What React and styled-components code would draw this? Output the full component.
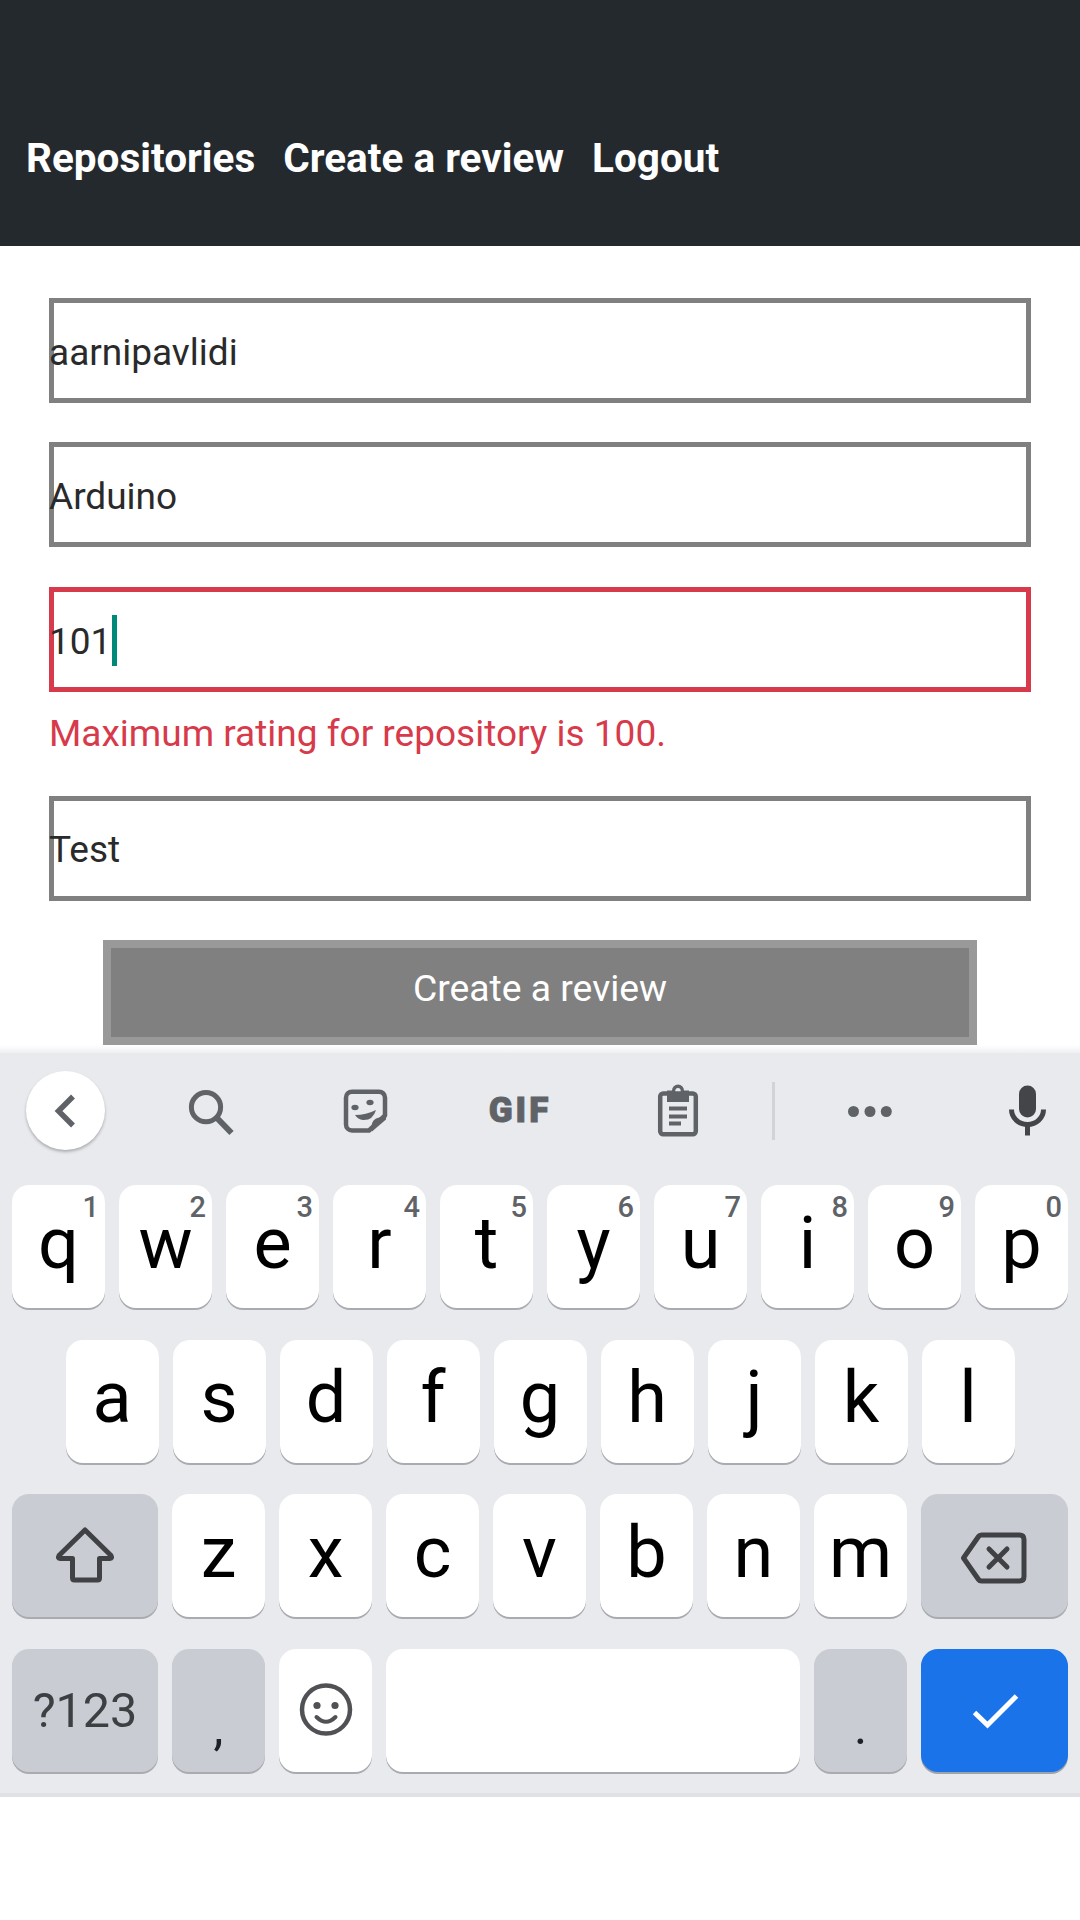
import React from "react";
import styled, { createGlobalStyle } from "styled-components";

const Global = createGlobalStyle`
  html, body { margin: 0; padding: 0; background: #fff; }
  body { font-family: Roboto, "Liberation Sans", sans-serif; }
  #root { width: 1080px; height: 1920px; overflow: hidden; }
`;

const Page = styled.div`
  width: 1080px;
  display: flex;
  flex-direction: column;
`;

const Header = styled.header`
  height: 246px;
  box-sizing: border-box;
  padding: 135px 0 0 26px;
  background: #24292e;
  display: flex;
  gap: 28px;
`;

const NavLink = styled.a`
  color: #fff;
  font-size: 40.5px;
  font-weight: 700;
  line-height: 47px;
`;

const Form = styled.form`
  display: flex;
  flex-direction: column;
  padding: 52px 49px 0;
`;

const Field = styled.div`
  height: 105px;
  box-sizing: border-box;
  margin-bottom: ${(p) => p.$gap}px;
  padding-top: ${(p) => p.$top}px;
  box-shadow: inset 0 0 0 5px ${(p) => (p.$error ? "#d73a4a" : "#808080")};
  display: flex;
  align-items: center;
  color: #2a2a2a;
  font-size: 37px;
  line-height: 43px;
`;

const Caret = styled.span`
  width: 5px;
  height: 51px;
  margin: 0 0 2px 1px;
  background: #00897b;
`;

const ErrorText = styled.div`
  height: 64px;
  margin-bottom: 40px;
  padding-top: 20px;
  box-sizing: border-box;
  color: #d73a4a;
  font-size: 37px;
  line-height: 43px;
`;

const Submit = styled.div`
  align-self: center;
  width: 874px;
  height: 105px;
  box-sizing: border-box;
  border: 8px solid #999;
  background: #808080;
  color: #fff;
  font-size: 37.3px;
  display: flex;
  align-items: center;
  justify-content: center;
  padding-bottom: 9px;
`;

const Shade = styled.div`
  height: 8px;
  background: linear-gradient(to bottom, #fff, #eff0f2);
`;

const Keyboard = styled.section`
  background: #e8eaed;
  border-bottom: 4px solid #e0e1e4;
  padding: 18px 12px 21.5px;
  display: flex;
  flex-direction: column;
`;

const Toolbar = styled.div`
  height: 79px;
  margin: 0 0 35px 14px;
  display: flex;
  align-items: center;
`;

const BackButton = styled.div`
  width: 79px;
  height: 79px;
  border-radius: 50%;
  background: #fff;
  box-shadow: 0 2px 3px rgba(60, 64, 67, 0.35);
  display: flex;
  align-items: center;
  justify-content: center;
`;

const Slot = styled.div`
  width: ${(p) => p.$w}px;
  margin-left: ${(p) => p.$ml}px;
  display: flex;
  justify-content: center;
`;

const GifLabel = styled.span`
  font-family: Roboto, sans-serif;
  font-weight: 900;
  font-size: 35px;
  line-height: 40px;
  letter-spacing: 3px;
  color: #5f6368;
  -webkit-text-stroke: 1px #5f6368;
`;

const Divider = styled.div`
  width: 3px;
  height: 58px;
  background: #d2d3d6;
`;

const Row = styled.div`
  display: flex;
  justify-content: center;
  gap: 14px;
  margin-bottom: ${(p) => (p.$last ? 0 : "31.5px")};
`;

const Key = styled.div`
  position: relative;
  width: ${(p) => p.$w || 93}px;
  height: 123px;
  border-radius: 17px;
  background: ${(p) => (p.$tone === "gray" ? "#caccd3" : p.$tone === "blue" ? "#1a73e8" : "#fff")};
  box-shadow: 0 2px 0 ${(p) => (p.$tone === "blue" ? "#9fa3aa" : "#a9abb0")};
  display: flex;
  align-items: center;
  justify-content: center;
`;

const Letter = styled.span`
  color: #000;
  font-size: 72px;
  line-height: 84px;
  margin-bottom: 6px;
`;

const Hint = styled.span`
  position: absolute;
  top: 5px;
  right: 6px;
  font-size: 29px;
  line-height: 34px;
  font-weight: 500;
  color: #5f6368;
`;

const SymbolLabel = styled.span`
  font-size: 48.5px;
  color: #3c4043;
`;

const Punct = styled.span`
  font-size: 50px;
  line-height: 50px;
  color: #202124;
  padding-top: ${(p) => p.$top}px;
`;

const Svg = ({ vb, w, h, children }) => (
  <svg width={w} height={h} viewBox={vb} style={{ display: "block" }}>
    {children}
  </svg>
);

const row1 = [["q", "1"], ["w", "2"], ["e", "3"], ["r", "4"], ["t", "5"], ["y", "6"], ["u", "7"], ["i", "8"], ["o", "9"], ["p", "0"]];

export default function App() {
  return (
    <Page>
      <Global />
      <Header>
        <NavLink>Repositories</NavLink>
        <NavLink>Create a review</NavLink>
        <NavLink>Logout</NavLink>
      </Header>
      <Form>
        <Field $gap={39} $top={4}>aarnipavlidi</Field>
        <Field $gap={40} $top={4}>Arduino</Field>
        <Field $error $gap={0} $top={3}>101<Caret /></Field>
        <ErrorText>Maximum rating for repository is 100.</ErrorText>
        <Field $gap={39} $top={2}>Test</Field>
        <Submit>Create a review</Submit>
      </Form>
      <Shade />
      <Keyboard>
        <Toolbar>
          <BackButton>
            <Svg vb="46 1090.5 40 40" w={40} h={40}>
              <path d="M73 1096 L58.5 1110.5 L73 1125" fill="none" stroke="#5f6368" strokeWidth="5.5" />
            </Svg>
          </BackButton>
          <Slot $w={60} $ml={77}>
            <Svg vb="182 1080.5 60 60" w={60} h={60}>
              <circle cx="206" cy="1106.7" r="14.6" fill="none" stroke="#5f6368" strokeWidth="5" />
              <path d="M217 1117.5 L231.5 1132.5" fill="none" stroke="#5f6368" strokeWidth="6" />
            </Svg>
          </Slot>
          <Slot $w={60} $ml={93}>
            <Svg vb="335 1080.5 60 60" w={60} h={60}>
              <path d="M352 1091.2 H379 a6 6 0 0 1 6 6 V1115 L369 1130 H352 a6 6 0 0 1 -6 -6 V1097.2 a6 6 0 0 1 6 -6 Z" fill="none" stroke="#5f6368" strokeWidth="4.5" strokeLinejoin="round" />
              <path d="M386 1116 L386 1119 L372 1131 Q370 1121 376 1118 Q381 1116 386 1116 Z" fill="#5f6368" />
              <ellipse cx="355" cy="1107" rx="3.6" ry="2.8" fill="#5f6368" />
              <ellipse cx="370" cy="1102" rx="3.6" ry="2.8" fill="#5f6368" />
              <path d="M355 1114.5 Q366 1114.5 376 1109.5 Q373 1120 363 1119.5 Q358 1119 355 1114.5 Z" fill="#5f6368" />
            </Svg>
          </Slot>
          <Slot $w={80} $ml={85}>
            <GifLabel>GIF</GifLabel>
          </Slot>
          <Slot $w={60} $ml={88}>
            <Svg vb="648 1080.5 60 60" w={60} h={60}>
              <rect x="660.2" y="1093" width="35.6" height="40.8" rx="3" fill="none" stroke="#5f6368" strokeWidth="4.5" />
              <path fillRule="evenodd" d="M667 1090 H672 a6 6 0 0 1 12 0 H689 V1101.5 H667 Z M678 1087.5 a2.8 2.8 0 1 0 0.01 0 Z" fill="#5f6368" />
              <rect x="669" y="1106" width="18" height="4" fill="#5f6368" />
              <rect x="669" y="1114" width="18" height="4" fill="#5f6368" />
              <rect x="669" y="1121" width="12" height="4" fill="#5f6368" />
            </Svg>
          </Slot>
          <Slot $w={3} $ml={64}>
            <Divider />
          </Slot>
          <Slot $w={60} $ml={65}>
            <Svg vb="840 1080.5 60 60" w={60} h={60}>
              <circle cx="853.5" cy="1111" r="5.5" fill="#5f6368" />
              <circle cx="870" cy="1111" r="5.5" fill="#5f6368" />
              <circle cx="886.3" cy="1111" r="5.5" fill="#5f6368" />
            </Svg>
          </Slot>
          <Slot $w={60} $ml={98}>
            <Svg vb="998 1080.5 60 60" w={60} h={60}>
              <rect x="1019" y="1085" width="17" height="32" rx="8.5" fill="#444548" />
              <path d="M1011.5 1109 a16 15 0 0 0 32 0" fill="none" stroke="#444548" strokeWidth="5" />
              <rect x="1025" y="1124" width="5" height="11" fill="#444548" />
            </Svg>
          </Slot>
        </Toolbar>
        <Row>
          {row1.map(([k, n]) => (
            <Key key={k}>
              <Letter>{k}</Letter>
              <Hint>{n}</Hint>
            </Key>
          ))}
        </Row>
        <Row>
          {"asdfghjkl".split("").map((k) => (
            <Key key={k}><Letter>{k}</Letter></Key>
          ))}
        </Row>
        <Row>
          <Key $w={146} $tone="gray">
            <Svg vb="50 1521.5 70 70" w={70} h={70}>
              <path d="M85 1530.5 L59 1556 Q57.5 1559 60 1559 H72.5 V1578.5 q0 2 2 2 H97.5 q2 0 2 -2 V1559 H110 Q112.5 1559 111 1556 Z" fill="none" stroke="#404144" strokeWidth="5" strokeLinejoin="round" />
            </Svg>
          </Key>
          {"zxcvbnm".split("").map((k) => (
            <Key key={k}><Letter>{k}</Letter></Key>
          ))}
          <Key $w={147} $tone="gray">
            <Svg vb="954.5 1521.5 80 70" w={80} h={70}>
              <path d="M963 1558.5 L978 1537 Q979 1535.5 981 1535.5 H1019 q4.5 0 4.5 4.5 V1577 q0 4.5 -4.5 4.5 H981 Q979 1581.5 978 1580 Z" fill="none" stroke="#404144" strokeWidth="5" strokeLinejoin="round" />
              <path d="M988.5 1549.5 L1006.5 1567.5 M1006.5 1549.5 L988.5 1567.5" fill="none" stroke="#404144" strokeWidth="5" strokeLinecap="round" />
            </Svg>
          </Key>
        </Row>
        <Row $last>
          <Key $w={146} $tone="gray">
            <SymbolLabel>?123</SymbolLabel>
          </Key>
          <Key $tone="gray">
            <Punct $top={34}>,</Punct>
          </Key>
          <Key>
            <Svg vb="295.5 1680.5 60 60" w={60} h={60}>
              <circle cx="325.5" cy="1710" r="24" fill="none" stroke="#505154" strokeWidth="4.5" />
              <circle cx="316.5" cy="1706" r="3.6" fill="#505154" />
              <circle cx="334.5" cy="1706" r="3.6" fill="#505154" />
              <path d="M316 1717.5 Q325.5 1727 335 1717.5" fill="none" stroke="#505154" strokeWidth="4" strokeLinecap="round" />
            </Svg>
          </Key>
          <Key $w={414} />
          <Key $tone="gray">
            <Punct $top={34}>.</Punct>
          </Key>
          <Key $w={147} $tone="blue">
            <Svg vb="964.5 1680.5 60 60" w={60} h={60}>
              <path d="M974 1713 L987 1725.5 L1016 1696.5" fill="none" stroke="#fff" strokeWidth="5" />
            </Svg>
          </Key>
        </Row>
      </Keyboard>
    </Page>
  );
}
